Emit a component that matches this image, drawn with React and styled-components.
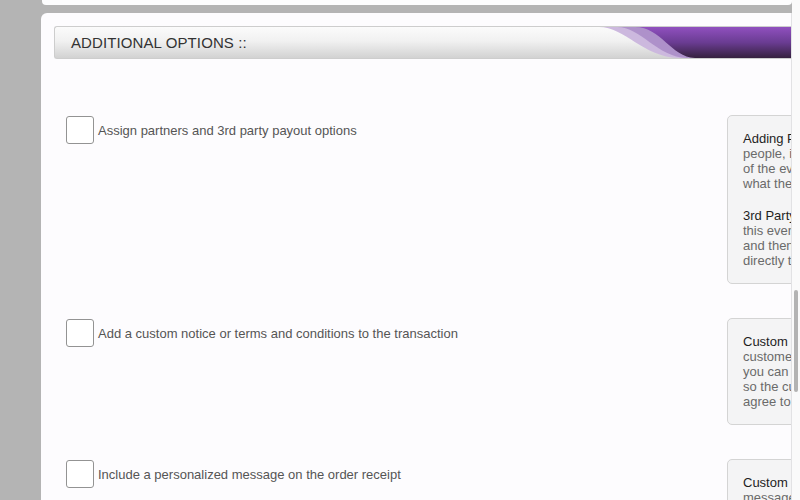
import React from 'react'
import styled, { createGlobalStyle } from 'styled-components'

const GlobalStyle = createGlobalStyle`
  html, body {
    margin: 0;
    padding: 0;
    font-family: "Liberation Sans", Arial, sans-serif;
  }
  * {
    box-sizing: border-box;
  }
`

const options = [
  {
    label: 'Assign partners and 3rd party payout options',
    info: [
      {
        title: 'Adding Partners: lets you share',
        lines: [
          'people, including promoters, a percentage',
          'of the event sales and lets you decide',
          'what they will receive from each order.',
        ],
      },
      {
        title: '3rd Party Payouts: allow you to send',
        lines: [
          'this event payout to another account',
          'and then the funds are transferred',
          'directly to that person or business.',
        ],
      },
    ],
  },
  {
    label: 'Add a custom notice or terms and conditions to the transaction',
    info: [
      {
        title: 'Custom Notice: shows your',
        lines: [
          'customers a message at checkout, and',
          'you can require them to accept it',
          'so the customer has to read and',
          'agree to your terms before paying.',
        ],
      },
    ],
  },
  {
    label: 'Include a personalized message on the order receipt',
    info: [
      {
        title: 'Custom Receipt Message:',
        lines: ['message shown on the order receipt'],
      },
    ],
  },
]

function HeaderWave() {
  return (
    <Wave viewBox="0 0 200 32" preserveAspectRatio="none">
      <defs>
        <linearGradient id="purple" x1="0" y1="0" x2="0" y2="1">
          <stop offset="0" stopColor="#9050bf" />
          <stop offset="0.5" stopColor="#6a3c92" />
          <stop offset="1" stopColor="#36213f" />
        </linearGradient>
      </defs>
      <path d="M8,0 C34,0 52,31 88,32 L200,32 L200,0 Z" fill="#ccb8de" />
      <path d="M26,0 C50,0 66,31 96,32 L200,32 L200,0 Z" fill="#ab8dc8" opacity="0.9" />
      <path d="M44,0 C70,0 80,31 104,32 L200,32 L200,0 Z" fill="url(#purple)" />
    </Wave>
  )
}

function OptionRow({ label, info }) {
  return (
    <Row>
      <Checkbox />
      <Label>{label}</Label>
      <InfoBox>
        {info.map((p) => (
          <InfoPara key={p.title}>
            <InfoTitle>{p.title}</InfoTitle>
            {p.lines.map((l) => (
              <InfoLine key={l}>{l}</InfoLine>
            ))}
          </InfoPara>
        ))}
      </InfoBox>
    </Row>
  )
}

export default function App() {
  return (
    <Page>
      <GlobalStyle />
      <Main>
        <TopCard />
        <Panel>
          <SectionHeader>
            <HeaderTitle>ADDITIONAL OPTIONS ::</HeaderTitle>
            <HeaderWave />
          </SectionHeader>
          <OptionList>
            {options.map((o) => (
              <OptionRow key={o.label} label={o.label} info={o.info} />
            ))}
          </OptionList>
        </Panel>
      </Main>
      <ScrollGutter>
        <Thumb />
      </ScrollGutter>
    </Page>
  )
}

const Page = styled.div`
  display: flex;
  width: 800px;
  height: 500px;
  overflow: hidden;
  background: #b4b4b4;
`

const Main = styled.div`
  flex: 1;
  display: flex;
  flex-direction: column;
  padding-left: 41px;
  min-width: 0;
`

const TopCard = styled.div`
  height: 5px;
  margin-left: 1px;
  background: #fdfdfe;
  border-radius: 0 0 4px 4px;
  flex-shrink: 0;
`

const Panel = styled.div`
  flex: 1;
  margin-top: 8px;
  background: #fdfcfe;
  border-radius: 6px 0 0 0;
  border-right: 1px solid #e2e2e4;
  overflow: hidden;
`

const SectionHeader = styled.div`
  position: relative;
  display: flex;
  align-items: center;
  height: 33px;
  margin: 13px 0 0 13px;
  padding-left: 16px;
  border: 1px solid #cdcdcd;
  border-right: none;
  border-radius: 3px 0 0 3px;
  background: linear-gradient(#fbfbfb 0%, #f1f1f1 45%, #d2d2d2 100%);
  overflow: hidden;
`

const HeaderTitle = styled.h2`
  margin: 0;
  font-size: 15px;
  font-weight: normal;
  color: #333;
  letter-spacing: 0.1px;
`

const Wave = styled.svg`
  position: absolute;
  right: 0;
  top: 0;
  width: 200px;
  height: 100%;
`

const OptionList = styled.div`
  display: flex;
  flex-direction: column;
  gap: 34px;
  padding: 56px 0 0 25px;
`

const Row = styled.div`
  display: grid;
  grid-template-columns: 32px 629px 250px;
  align-items: start;
`

const Checkbox = styled.div`
  width: 28px;
  height: 28px;
  margin-top: 1px;
  border: 1px solid #939393;
  border-radius: 3px;
  background: #fff;
`

const Label = styled.div`
  font-size: 13px;
  line-height: 28px;
  margin-top: 2px;
  color: #555;
`

const InfoBox = styled.div`
  display: flex;
  flex-direction: column;
  gap: 17px;
  padding: 15px;
  border: 1px solid #d4d4d4;
  border-radius: 5px;
  background: #f4f4f5;
  white-space: nowrap;
`

const InfoPara = styled.div`
  display: flex;
  flex-direction: column;
  font-size: 13px;
  line-height: 15px;
`

const InfoTitle = styled.span`
  color: #1e1e1e;
`

const InfoLine = styled.span`
  color: #6a6a6a;
`

const ScrollGutter = styled.div`
  width: 8px;
  flex-shrink: 0;
  padding: 290px 0 0 2px;
  background: #fafafa;
`

const Thumb = styled.div`
  width: 4px;
  height: 102px;
  border-radius: 2px;
  background: #b3b3b3;
`
